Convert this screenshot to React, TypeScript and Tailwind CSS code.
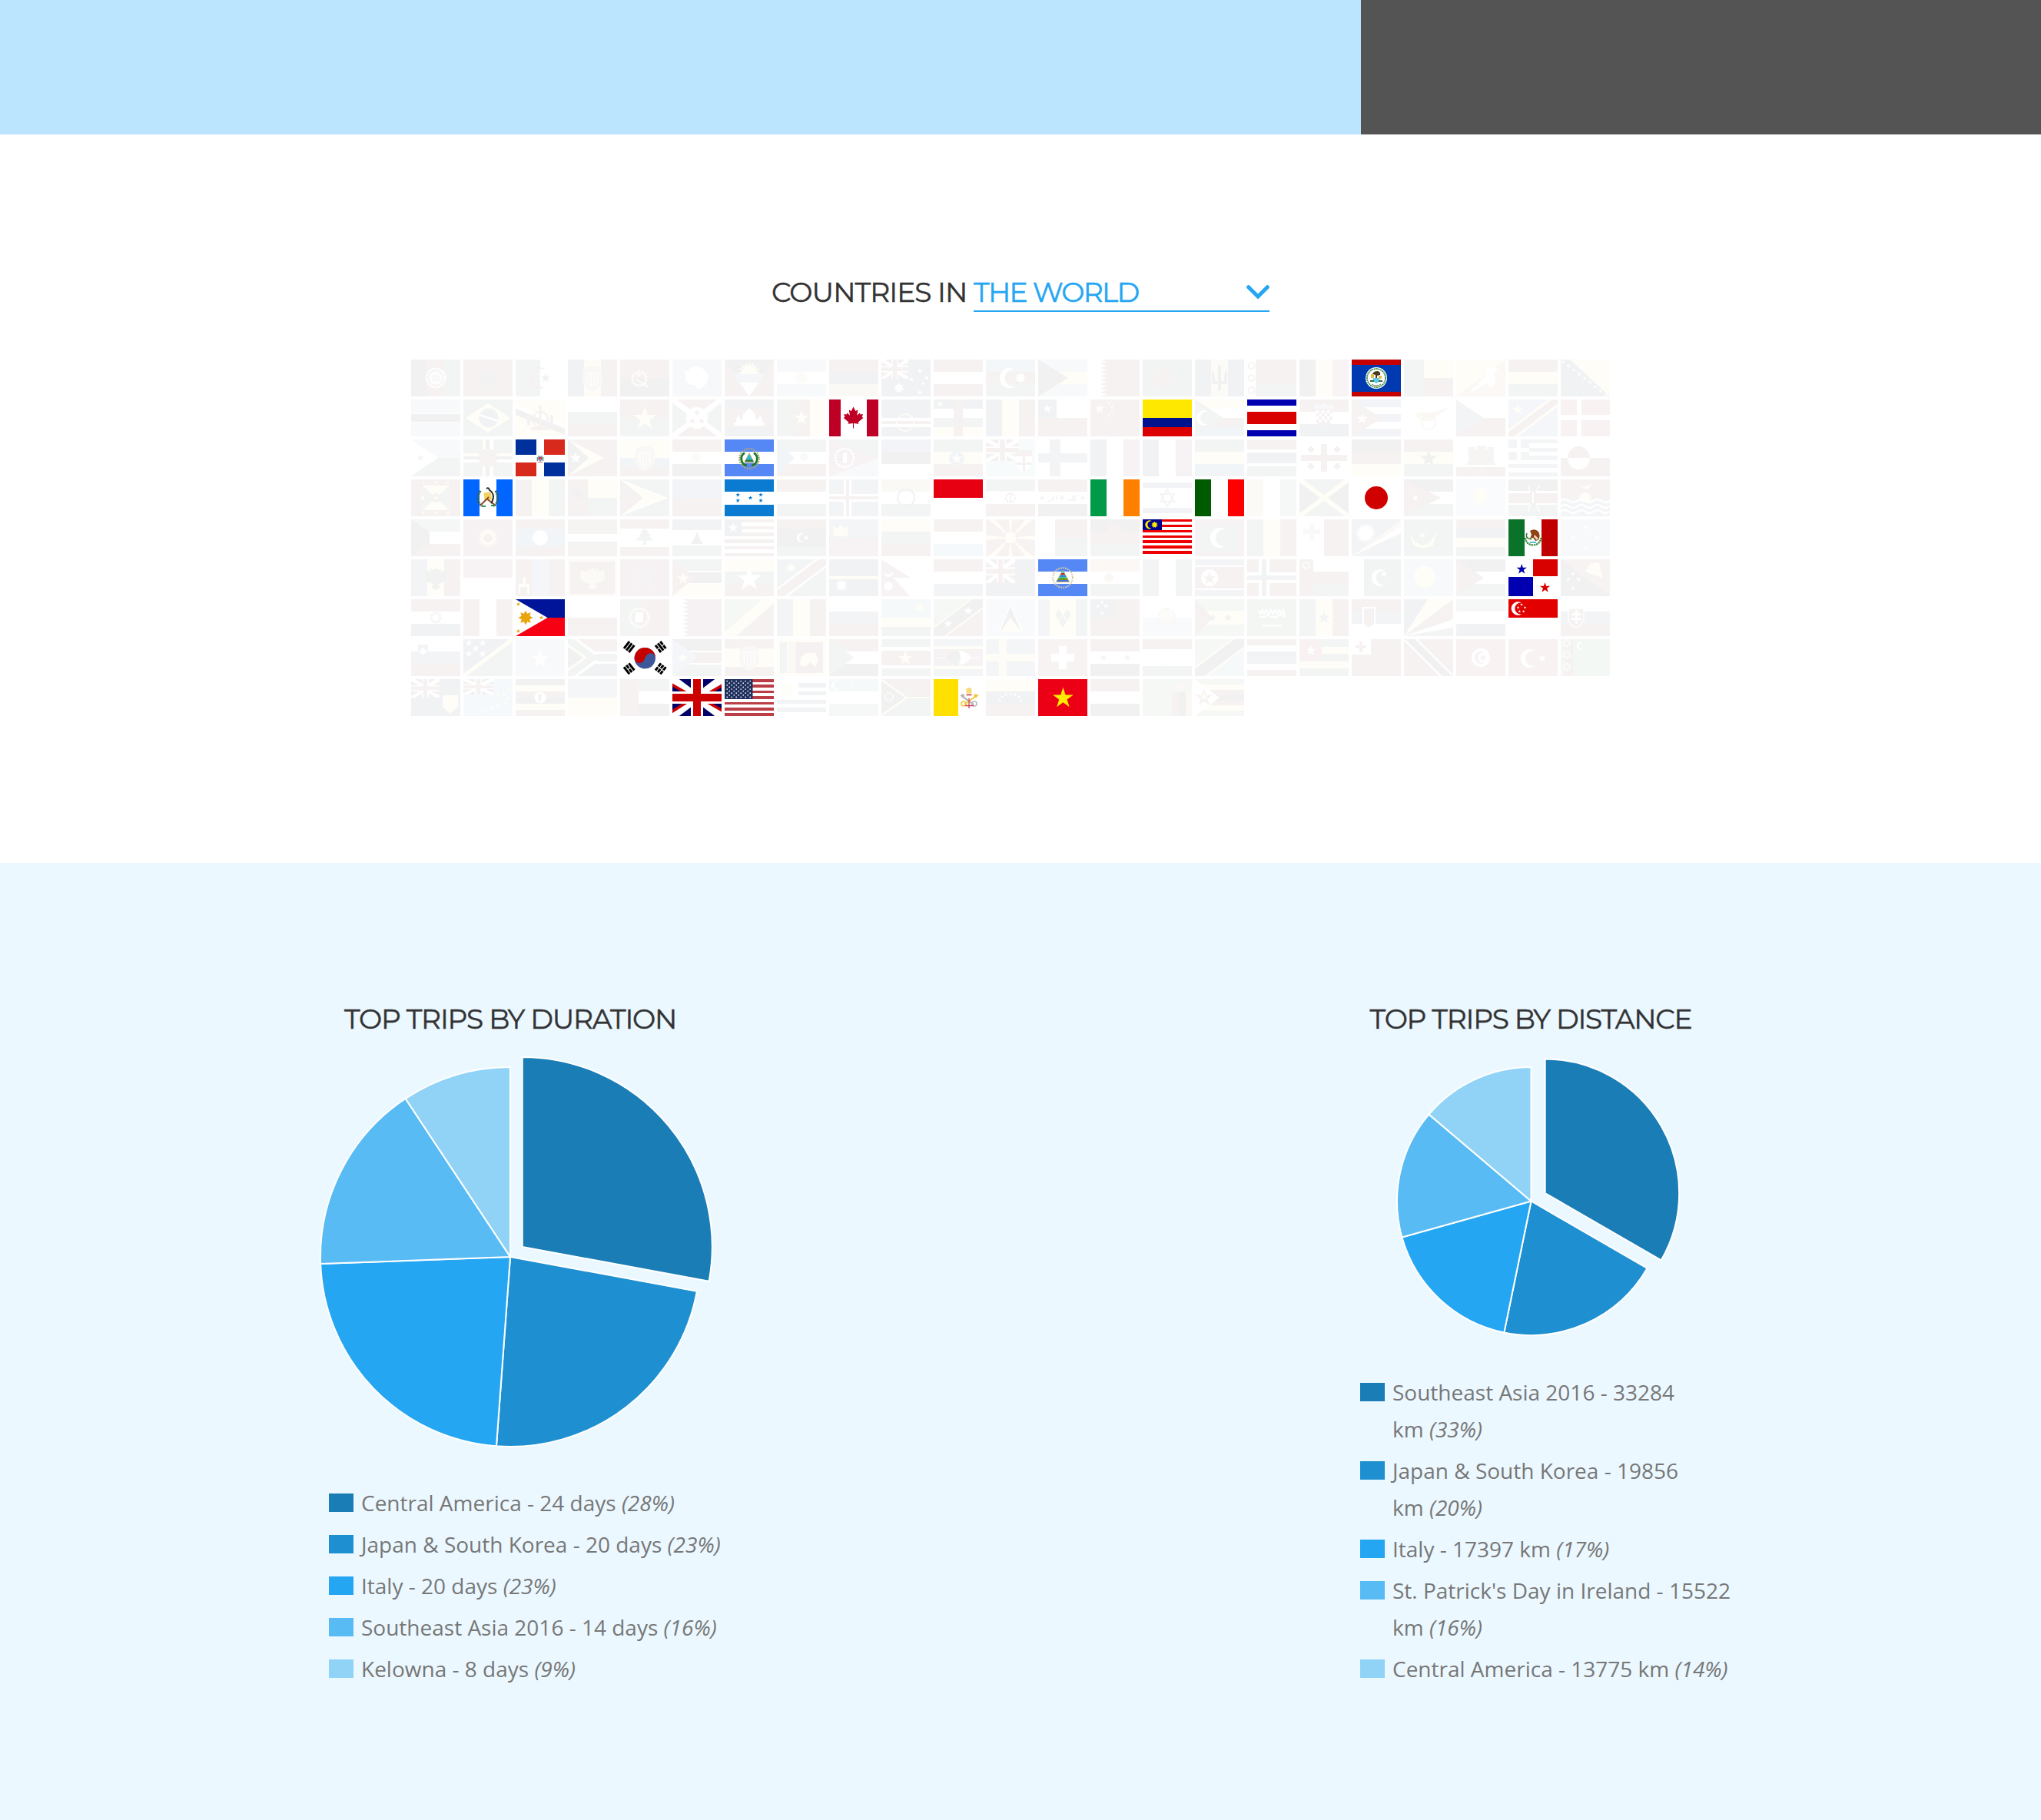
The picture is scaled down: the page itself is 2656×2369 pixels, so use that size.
import React from "react";

type Flag = { spec: string; visited?: boolean };

const palette: Record<string, string> = {
  k: "#000000",
  w: "#ffffff",
  r: "#c40000",
  g: "#00652b",
  b: "#00107a",
  B: "#0050a8",
  y: "#ffec00",
  o: "#ff8a00",
  s: "#55aadd",
  m: "#8f1238",
  d: "#4a4a4a",
  e: "#e8e000",
};
const col = (c: string) => palette[c] ?? c;

const starPoints = (cx: number, cy: number, r: number, n = 5, inner = 0.39) =>
  Array.from({ length: n * 2 }, (_, i) => {
    const rad = i % 2 === 0 ? r : r * inner;
    const a = (Math.PI * i) / n - Math.PI / 2;
    return `${(cx + rad * Math.cos(a)).toFixed(2)},${(cy + rad * Math.sin(a)).toFixed(2)}`;
  }).join(" ");

function UnionJack({ w, h }: { w: number; h: number }) {
  return (
    <svg x="0" y="0" width={w} height={h} viewBox="0 0 64 48" preserveAspectRatio="none">
      <rect width="64" height="48" fill="#000066" />
      <path d="M0 0L64 48M64 0L0 48" stroke="#fff" strokeWidth="10.5" />
      <path d="M-2 6.5L22 20M44 20L66 7.5M42 28L66 41.5M22 28L-2 43.5" stroke="#c00" strokeWidth="3.6" />
      <path d="M32 0V48M0 24H64" stroke="#fff" strokeWidth="16" />
      <path d="M32 0V48M0 24H64" stroke="#c00" strokeWidth="10" />
    </svg>
  );
}

function stripes(parts: string[], vertical: boolean, key: number) {
  const items = parts.map((p) => {
    const [c, n] = p.split("*");
    return { c, n: n ? Number(n) : 1 };
  });
  const total = items.reduce((a, i) => a + i.n, 0);
  let pos = 0;
  return (
    <g key={key} shapeRendering="crispEdges">
      {items.map((it, i) => {
        const full = vertical ? 64 : 48;
        const a = (pos / total) * full;
        pos += it.n;
        const len = (it.n / total) * full;
        return vertical ? (
          <rect key={i} x={a} y={0} width={len} height={48} fill={col(it.c)} />
        ) : (
          <rect key={i} x={0} y={a} width={64} height={len} fill={col(it.c)} />
        );
      })}
    </g>
  );
}

function emblem(name: string, key: number): React.ReactNode {
  switch (name) {
    case "leaf":
      return (
        <path
          key={key}
          fill="#bf0026"
          d="M31.5 9.5L34.3 15L37.4 13.4L36.2 20.8L39.8 17.4L40.6 19.5L44 18.9L42.8 22.8L44.4 24L37.8 29.6L38.4 31.8L32 30.9L32 37.5H31L31 30.9L24.7 31.8L25.3 29.6L18.8 24L20.4 22.8L19.2 18.9L22.6 19.5L23.4 17.4L27 20.8L25.7 13.4L28.8 15Z"
        />
      );
    case "korea": {
      const marks: [number, number, number, string][] = [
        [11.7, 10, -52, "111"],
        [52.7, 10, 52, "010"],
        [11.7, 38.4, 52, "101"],
        [52.7, 38.4, -52, "000"],
      ];
      return (
        <g key={key}>
          <g transform="translate(32.3 24.7) rotate(-4)">
            <circle r="13.7" fill="#3f5798" />
            <path d="M-13.7 0A13.7 13.7 0 0 1 13.7 0C12 -7.5 3.5 -8 0 0C-3.5 8 -12 7.5 -13.7 0Z" fill="#c40000" />
          </g>
          {marks.map(([x, y, a, bits], i) => (
            <g key={i} transform={`translate(${x} ${y}) rotate(${a})`}>
              {bits.split("").map((bit, j) => {
                const yy = (j - 1) * 4 - 1.5;
                return bit === "1" ? (
                  <rect key={j} x="-5.8" y={yy} width="11.6" height="3" />
                ) : (
                  <g key={j}>
                    <rect x="-5.8" y={yy} width="5.2" height="3" />
                    <rect x="0.6" y={yy} width="5.2" height="3" />
                  </g>
                );
              })}
            </g>
          ))}
        </g>
      );
    }
    case "belize":
      return (
        <g key={key}>
          <circle cx="32" cy="24" r="14" fill="#fff" />
          <circle cx="32" cy="24" r="12" fill="none" stroke="#2f8a3e" strokeWidth="1.8" strokeDasharray="2 .8" />
          <path d="M27 19Q28 15 34 15Q38 16 37 20L33 21V24H31V20Z" fill="#4a3a20" />
          <path d="M25 19h4v5h-4zM35 21h4v4h-4z" fill="#e8b94c" />
          <path d="M28 24h7l2 4-5 3-5-3z" fill="#5ccbe8" />
          <path d="M24 27h5v2h-5zM35 27h5v2h-5z" fill="#2f6a3e" />
          <path d="M26 32q6 4 12 0" stroke="#777" fill="none" />
        </g>
      );
    case "salvador":
      return (
        <g key={key}>
          <circle cx="32" cy="25" r="12.8" fill="none" stroke="#b5a67a" strokeWidth="2.2" strokeDasharray="1.8 1.3" />
          <path d="M26 17.5A9 9 0 0 0 29 34M38 17.5A9 9 0 0 1 35 34" fill="none" stroke="#1d7c2c" strokeWidth="2.8" />
          <path d="M32 18L38 29H26Z" fill="#2bb6d8" stroke="#c9a44c" strokeWidth=".8" />
          <path d="M28 26.5h8l1.4 2.5H26.6z" fill="#2e7a2a" />
          <path d="M26 31h12" stroke="#3d64c9" strokeWidth="1.4" />
        </g>
      );
    case "nicaragua":
      return (
        <g key={key}>
          <circle cx="32" cy="24" r="12.8" fill="none" stroke="#d8c9a0" strokeWidth="2" strokeDasharray="1.8 1.2" />
          <path d="M32 14L40.5 29.5H23.5Z" fill="#35dce0" stroke="#c9a44c" strokeWidth=".8" />
          <path d="M30.2 18h3.6l1.2 2.2h-6z" fill="#d22" />
          <path d="M28.5 21.4h7l.6 1.2h-8.2z" fill="#2a2ad0" />
          <path d="M26.5 24.8q5.5-2 11 0l1.2 2.2H25.3z" fill="#6a9a1a" />
          <path d="M25 27h14l1 2H24z" fill="#4a6fe0" />
        </g>
      );
    case "guatemala":
      return (
        <g key={key}>
          <path d="M22.5 15C17 22 18 31 25 35M41.5 15C47 22 45 31 39 35" fill="none" stroke="#35664a" strokeWidth="2.6" strokeDasharray="2.2 .9" />
          <path d="M26.5 17.5l9-1 1.5 10-9.5 1z" fill="#f4d160" />
          <path d="M22 34l11-11M42 34L30 25" stroke="#8a4a24" strokeWidth="1.8" />
          <path d="M30 12q3-2 4 2 5 3 5 9-1 6-3 8" fill="none" stroke="#26302c" strokeWidth="2" />
          <path d="M25 35h4M36 34h5" stroke="#2b9a58" strokeWidth="2" />
        </g>
      );
    case "dominican":
      return (
        <g key={key}>
          <path d="M29 21.5h6v5l-3 2.6-3-2.6z" fill="#8f9fd0" />
          <path d="M30 23h4v3h-4z" fill="#c44" />
          <path d="M28.3 23v5M35.7 23v5" stroke="#4f9a6a" strokeWidth="1.2" />
          <path d="M28.5 29.5h7" stroke="#d77" strokeWidth="1" />
        </g>
      );
    case "mexico":
      return (
        <g key={key}>
          <path d="M22 24Q23 33 32 33.5Q41 33 42.5 24" fill="none" stroke="#3a8a3a" strokeWidth="2.2" strokeDasharray="2.4 .8" />
          <path d="M28 15q6-4 11 1 3 6 0 11l-4 1-3-4-4 1 2-5z" fill="#8f4413" />
          <path d="M34 20l5 5-2 2-4-4z" fill="#ead9c0" />
          <path d="M24 18q-2 5 2 7l4 1" fill="none" stroke="#3f7a3a" strokeWidth="1.6" />
          <path d="M28 30h8" stroke="#46b6c4" strokeWidth="1.8" />
        </g>
      );
    case "vatican":
      return (
        <g key={key}>
          <path d="M42.5 12.5q3.5-3 7 0v6h-7z" fill="#f5dc7a" />
          <path d="M42.5 20.5h7" stroke="#c22" strokeWidth="1.4" />
          <path d="M38 23L52 33" stroke="#aaa" strokeWidth="2" />
          <path d="M55 22L40 33" stroke="#f0c83c" strokeWidth="2" />
          <path d="M34.5 21l4-2 2 3-3 2.5z" fill="#b5b5b5" />
          <path d="M58.5 21l-5-2-1.5 3 3 2.5z" fill="#f0c83c" />
          <circle cx="39" cy="32" r="3" fill="none" stroke="#f0c83c" strokeWidth="1.6" />
          <circle cx="53" cy="32" r="3" fill="none" stroke="#bbb" strokeWidth="1.6" />
          <path d="M46 25v13M41 34.5h11" stroke="#d0405a" strokeWidth="1.3" />
        </g>
      );
    case "usa":
      return (
        <g key={key}>
          <rect width="36.5" height="26" fill="#20305f" />
          {Array.from({ length: 9 }, (_, row) =>
            Array.from({ length: row % 2 ? 5 : 6 }, (_, i) => (
              <circle key={`${row}-${i}`} cx={3.2 + (row % 2 ? 3 : 0) + i * 6} cy={2.6 + row * 2.6} r=".85" fill="#fff" />
            )),
          )}
        </g>
      );
    case "wheel":
      return <circle key={key} cx="32" cy="24" r="11" fill="none" stroke="#007" strokeWidth="2" strokeDasharray="4 .5" />;
    case "hexstar":
      return <path key={key} d="M32 13L41 29H23ZM32 35L23 19H41Z" fill="none" stroke="#0038b8" strokeWidth="1.6" />;
    case "cedar":
      return <path key={key} d="M32 12L37 16 36 17 40 21 38 22 44 27 34 28V33H30V28L20 27 26 22 24 21 28 17 27 16Z" fill="#00652b" />;
    case "bosnia":
      return (
        <g key={key}>
          {Array.from({ length: 9 }, (_, i) => (
            <polygon key={i} points={starPoints(3 + i * 7, 3 + i * 5.4, 2.8)} fill="#fff" />
          ))}
        </g>
      );
    case "antarctica":
      return <path key={key} d="M14 13L19 16 23 11 31 9 40 12 46 18 46 24 44 32 38 37 32 38 30 33 24 33 18 28 17 20Z" fill="#fff" />;
    case "eagle":
      return <path key={key} d="M32 10L34 14 40 12 38 17 45 14 46 28 40 31 35 32 38 37 32 40 26 37 29 32 24 31 18 28 19 14 26 17 24 12 30 14Z" fill="#222" />;
    case "goldeagle":
      return <path key={key} d="M32 10L34 14 40 12 38 17 47 14 48 26 40 31 35 32 38 37 32 39 26 37 29 32 24 31 16 26 17 14 26 17 24 12 30 14Z" fill="#d8b040" />;
    case "crest":
      return (
        <g key={key}>
          <path d="M20 12q12-7 24 0l1 14q-2 12-13 15q-11-3-13-15z" fill="#b08a4a" />
          <path d="M24 16h16v12q-2 6-8 8q-6-2-8-8z" fill="#e4d3a8" />
          <path d="M28 18v14M32 18v16M36 18v14" stroke="#943" strokeWidth="1.5" />
        </g>
      );
    case "wave":
      return (
        <g key={key} fill="none" stroke="#fff" strokeWidth="2.6">
          {[28, 35, 42].map((y) => (
            <path key={y} d={`M0 ${y}q5.3-4 10.6 0t10.6 0t10.6 0t10.6 0t10.6 0t10.6 0`} />
          ))}
        </g>
      );
    case "temple":
      return <path key={key} d="M12 34V30H15V26L18 20L20 26H24V20L28 15L32 11L36 15L40 20V26H43L46 20L49 26V30H52V34Z" fill="#fff" />;
    case "bhutan":
      return <path key={key} d="M20 43q-2-7 7-8q3-8 11-13q-2-10 8-12l8 2-5 8q4 7 0 15q-7 2-9-5l-10 7z" fill="#fff" />;
    case "castle":
      return <path key={key} d="M16 10h9v4h2V8h11v6h2v-4h9v21h3v2H13v-2h3zM30 37h4v9h-4z" fill="#a33" />;
    case "cyprus":
      return <path key={key} d="M15 20Q20 15 30 17Q44 16 60 9Q50 18 41 22Q38 29 28 28Q18 27 15 20Z" fill="#f0a000" />;
    case "shield":
      return <path key={key} d="M10 12H30V26Q27 34 20 37Q12 34 10 26Z" fill="#c40000" stroke="#fff" strokeWidth="1.5" />;
    case "checks":
      return (
        <g key={key}>
          <path d="M22 12H43V28Q40 34 32.5 36Q24 34 22 28Z" fill="#c40000" />
          {Array.from({ length: 12 }, (_, i) => (
            <rect key={i} x={22 + (i % 3) * 7 + (Math.floor(i / 3) % 2) * 3.5} y={14 + Math.floor(i / 3) * 4} width="3.5" height="4" fill="#fff" />
          ))}
          <path d="M19 12L21 5 26 8 32 5 38 8 43 5 46 12Z" fill="#68a" />
        </g>
      );
    case "script":
      return <path key={key} d="M15 15l2 4 3-5 2 5 3-5 3 5 3-5 2 5 3-5 3 5 3-5 2 5 3-5 2 8M16 23h8l3-3 4 3h8l4-3 5 3" fill="none" stroke="#fff" strokeWidth="2" />;
    case "swazi":
      return (
        <g key={key}>
          <path d="M4 24H60" stroke="#55aadd" strokeWidth="2" />
          <path d="M16 24Q22 15 32 14Q44 16 49 24Q43 33 32 34Q21 33 16 24Z" fill="#000" />
          <path d="M32 14Q44 16 49 24Q43 33 32 34Q38 24 32 14Z" fill="#fff" />
        </g>
      );
    case "sunrays":
      return (
        <g key={key}>
          {Array.from({ length: 8 }, (_, i) => (
            <path key={i} d="M32 24L28 -20H36Z" transform={`rotate(${i * 45} 32 24)`} fill="#ffec00" />
          ))}
          <circle cx="32" cy="24" r="8" fill="#ffec00" stroke="#c40000" />
        </g>
      );
    case "nepal":
      return (
        <g key={key}>
          <path d="M0 0L38 24H16L37 48H0Z" fill="#c4001c" />
          <path d="M4 16q6 7 11 0q1 7-6 7q-6-1-5-7z" fill="#fff" />
          <polygon points={starPoints(9, 35, 7, 12, 0.7)} fill="#fff" />
        </g>
      );
    case "serrate":
      return <path key={key} d="M0 0H13L21 2.7 13 5.3 21 8 13 10.7 21 13.3 13 16 21 18.7 13 21.3 21 24 13 26.7 21 29.3 13 32 21 34.7 13 37.3 21 40 13 42.7 21 45.3 13 48H0Z" fill="#fff" />;
    case "iraq":
      return (
        <g key={key}>
          {[5, 31, 58].map((x) => (
            <polygon key={x} points={starPoints(x, 24, 4)} fill="#00652b" />
          ))}
          <path d="M13 28q6 1 8-7M24 20v7M38 27h7v-6M48 20v8" fill="none" stroke="#00652b" strokeWidth="1.8" />
        </g>
      );
    case "trident":
      return <path key={key} d="M22 12q5 8 4 16h4V10l2-4 2 4v18h4q-1-8 4-16v20h-8v8h-4v-8h-8z" fill="#000" />;
    case "map":
      return <path key={key} d="M12 22l2 5-3 3-3-3zM4 32h5v-2h4v2h5v13h-3V36H6v9H4z" fill="#ffec00" />;
    default:
      return null;
  }
}

function draw(token: string, key: number): React.ReactNode {
  const [op, ...a] = token.trim().split(/\s+/);
  const n = a.map(Number);
  switch (op) {
    case "h":
      return stripes(a, false, key);
    case "v":
      return stripes(a, true, key);
    case "r":
      return <rect key={key} x={n[0]} y={n[1]} width={n[2]} height={n[3]} fill={col(a[4])} shapeRendering="crispEdges" />;
    case "c":
      return <circle key={key} cx={n[0]} cy={n[1]} r={n[2]} fill={col(a[3])} />;
    case "o":
      return <circle key={key} cx={n[0]} cy={n[1]} r={n[2]} fill="none" stroke={col(a[3])} strokeWidth={n[4] || 2} strokeDasharray="3 1" />;
    case "p":
      return <polygon key={key} points={a.slice(0, -1).join(" ")} fill={col(a[a.length - 1])} />;
    case "s":
      return <polygon key={key} points={starPoints(n[0], n[1], n[2])} fill={col(a[3])} />;
    case "S":
      return <polygon key={key} points={starPoints(n[0], n[1], n[2], n[4], 0.6)} fill={col(a[3])} />;
    case "l":
      return <line key={key} x1={n[0]} y1={n[1]} x2={n[2]} y2={n[3]} strokeWidth={n[4]} stroke={col(a[5])} />;
    case "m":
      return (
        <path
          key={key}
          fill={col(a[3])}
          d={`M${n[0] + n[2] * 0.55} ${n[1] - n[2] * 0.83}A${n[2]} ${n[2]} 0 1 0 ${n[0] + n[2] * 0.55} ${n[1] + n[2] * 0.83}A${n[2] * 0.85} ${n[2] * 0.85} 0 1 1 ${n[0] + n[2] * 0.55} ${n[1] - n[2] * 0.83}Z`}
        />
      );
    case "u":
      return <UnionJack key={key} w={n[0]} h={n[1]} />;
    case "e":
      return emblem(a[0], key);
    default:
      return null;
  }
}

const f = (spec: string): Flag => ({ spec });
const on = (spec: string): Flag => ({ spec, visited: true });

const flags: Flag[] = [
  f("v k r g|o 32 24 12 w 3|c 32 24 9 #ddd|r 27 20 10 8 #999"),
  f("h #c00010|e eagle"),
  f("v g w|m 31 24 14 r|s 39 24 7 r"),
  f("v b e r|e crest"),
  f("h r k|o 25 25 9 y 3|s 24 20 4 y|l 20 25 37 36 2 y"),
  f("h #5a8fd0|e antarctica"),
  f("h r|p 0,0 64,0 32,48 k|S 32 17 15 y 16|p 12.5,19 51.5,19 44.5,30 19.5,30 #2a5fc8|p 19.5,30 44.5,30 32,48 w"),
  f("h s w s|S 32 24 9 #e8b84c 16"),
  f("h r b #e8a000"),
  f("h b|u 35 25|S 23 37 7 w 7|S 50 15 3 w 7|S 39 26 3 w 7|S 59 24 3 w 7|S 50 43 3 w 7|S 54 31 2 w 5"),
  f("h r w r"),
  f("h #1a7fc0 r g|m 31 24 13 w|S 45 24 7 w 8"),
  f("h s y s|p 0,0 39,24 0,48 k"),
  f("h r|e serrate"),
  f("h #00503c|c 26 24 13 r"),
  f("v b #f2c030 b|e trident"),
  f("h r*2 g|r 0 0 11 48 w|o 5.5 8 4 r 2|o 5.5 24 4 r 2|o 5.5 40 4 r 2"),
  f("v k y #d0202c"),
  on("h #c40000*7 #0039b0*34.5 #c40000*6.5|e belize"),
  f("h y r|r 0 0 26 48 g"),
  f("h o|p 0,0 64,0 0,48 y|e bhutan"),
  f("h r y g"),
  f("h b|p 12,0 64,0 64,48 y|e bosnia"),

  f("h s*18 w k*10 w s*18"),
  f("h g|p 3,24 32,5 61,24 32,43 y|c 33 24 12.5 b|l 21 20 45 28 2.5 w"),
  f("h y|p 0,6 64,32 64,44 0,18 w|p 0,12 64,38 64,46 0,20 k|o 32 26 10 r 3|l 32 8 32 36 3 r|l 20 38 44 38 4 r|l 17 20 17 34 4 r|l 47 20 47 34 4 r"),
  f("h w g r"),
  f("h r g|s 32 25 16 y"),
  f("h r|p 0,0 32,24 0,48 g|p 64,0 32,24 64,48 g|l 0 0 64 48 7 w|l 64 0 0 48 7 w|c 32 24 14 w|S 32 17 3.5 r 6|S 26 28 3.5 r 6|S 38 28 3.5 r 6"),
  f("h b r*2 b|e temple"),
  f("v g r y|s 32 24 10 y"),
  on("r 0 0 15 48 #bf0026|r 49 0 15 48 #bf0026|e leaf"),
  f("h b*24 w*4 r*4 w*4 b*12|o 31 30 11 y 2"),
  f("h b w g y|r 26 0 12 48 r|s 8 6 5 y"),
  f("v b y r"),
  f("h w r|r 0 0 24 24 b|s 12 12 6 w"),
  f("h #d00000|s 12 12 7 y|s 24 5 2.5 y|s 28 10 2.5 y|s 28 16 2.5 y|s 24 21 2.5 y"),
  on("h #ffe800*24 #00128c*12 #dd0000*12"),
  f("h y w r B|p 0,0 37,24 0,48 g|m 12 24 10 w"),
  on("h #0000b0*7.5 w*8.5 #d90000*16 w*8 #0000b0*8"),
  f("h r w b|e checks"),
  f("h #1246a0 w #1246a0 w #1246a0|p 0,0 40,24 0,48 #d02020|s 13.5 25 7 w"),
  f("h w|e cyprus|o 32 30 9 g 1.5"),
  f("h w r|p 0,0 36,24 0,48 #103a80"),
  f("h #2a60d8|l 0 48 64 0 15 y|l 0 48 64 0 9 r|s 12 13 8 y"),
  f("h #d00020|r 21 0 6 48 w|r 0 20 64 7 w"),

  f("h #5aa8e8 g|p 0,0 35,24 0,48 w|s 12 24 5 r"),
  f("h g|r 25 0 4 48 y|r 29 0 5 48 k|r 34 0 5 48 w|r 0 18 64 4 y|r 0 22 64 4 k|r 0 26 64 4 w|c 32 24 12 r|o 32 24 9 g 2"),
  on("r 0 0 27 20 #00309c|r 37 0 27 20 #d82a1c|r 0 30 27 18 #d82a1c|r 37 30 27 18 #00309c|e dominican"),
  f("h r|p 0,0 47,24 0,48 y|p 0,0 27,24 0,48 k|s 10 24 8 w"),
  f("h y*2 B r|e crest"),
  f("h r w k|c 31 24 6 #e8c060"),
  on("h #5588f5 w #5588f5|e salvador"),
  f("h g w r|p 0,0 23,24 0,48 B|c 35 23 5 #999"),
  f("h g s|p 0,0 64,24 0,48 #c00020|o 20 24 12 w 3|r 18 17 5 14 w"),
  f("h #1448b0 k w"),
  f("h g y r|c 30 25 10 B|s 30 25 8 y"),
  f("h #68bfe5|u 43 28|p 39,14 60,14 60,33 49,45 39,33 w|r 39 14 21 8 r|r 48 22 3 20 r|r 39 30 21 3 r"),
  f("h w|r 15 0 14 48 #103a80|r 0 18 64 12 #103a80"),
  f("v b w #c00020"),
  f("v b w #c00020"),
  f("h g y B"),
  f("h r*13 w*4 b*14 w*4 g*13"),
  f("h w|r 28 6 8 36 r|r 2 20 60 8 r|r 13 9 4 8 r|r 11 11 8 4 r|r 47 9 4 8 r|r 45 11 8 4 r|r 13 31 4 8 r|r 11 33 8 4 r|r 47 31 4 8 r|r 45 33 8 4 r"),
  f("h k r y"),
  f("h r y g|s 32 25 12 k"),
  f("h w*3 r*1|e castle"),
  f("h #0a4fb0 w #0a4fb0 w #0a4fb0 w #0a4fb0 w #0a4fb0|r 0 0 27 26.6 #0a4fb0|r 11 0 5 26.6 w|r 0 11 27 5 w"),
  f("h w r|p 9,24 10,18 14,12 20,9 27,9 33,13 37,18 38,24 r|p 9,24 10,30 14,36 20,39 27,39 33,36 37,30 38,24 w"),

  f("h #c00010|r 15 8 35 32 y|p 15,8 32,24 15,40 g|p 50,8 32,24 50,40 g|c 32 24 6 r|s 32 24 4 y|s 16 4 2.5 y|s 32 4 2.5 y|s 48 4 2.5 y|s 16 44 2.5 y|s 32 44 2.5 y|s 48 44 2.5 y|c 15 24 2.5 y"),
  on("v #0066ff*21 w*22 #0066ff*21|e guatemala"),
  f("v r y g"),
  f("h y g|r 0 0 26 48 r|s 13 20 9 k"),
  f("h g|p 0,0 62,24 0,48 w|p 0,2 57,24 0,46 y|p 0,0 29,24 0,48 k|p 0,2 26,24 0,46 r"),
  f("h #1040a0 r"),
  on("h #0a7bd0*15.5 w*17 #0a7bd0*15.5|s 17.2 20 3 #0a7bd0|s 17.2 27.5 3 #0a7bd0|s 33.5 24 3 #0a7bd0|s 47 20 3 #0a7bd0|s 47 27.5 3 #0a7bd0"),
  f("h r w g"),
  f("h #10409a|r 19 0 10 48 w|r 0 19 64 10 w|r 22 0 4 48 r|r 0 22 64 4 r"),
  f("h #f09030 w g|e wheel"),
  on("h #e70011 w"),
  f("h g w r|l 0 16 64 16 1 w|o 32 24 6 r 2|l 32 18 32 31 2 r"),
  f("h r w k|e iraq"),
  on("v #009a49*21 w*22 #ff7f00*21"),
  f("h w|r 0 4 64 7 #0030a0|r 0 37 64 7 #0030a0|e hexstar"),
  on("v #005a00*21 w*22 #ff0000*21"),
  f("v #f0a030 w #209a50"),
  f("h g|p 0,0 32,24 0,48 k|p 64,0 32,24 64,48 k|l 0 0 64 48 6 y|l 64 0 0 48 6 y"),
  on("c 32 24 15 #d00000"),
  f("h k w g|p 0,0 48,24 0,48 r|S 15 24 3.5 w 7"),
  f("h #80c4e8|c 32 20 10 y|l 20 31 46 33 2 y"),
  f("h k*15 w*2.5 r*13 w*2.5 g*15|l 25 8 40 42 1.5 w|l 40 8 25 42 1.5 w|p 32,9 39,24 32,41 25,24 #700|r 31 17 2 14 w"),
  f("h #d02020*26 #1050a0*22|S 32 25 10 y 16|p 21,7 32,10 43,5 34,13 y|r 0 29 64 19 #1050a0|e wave"),

  f("h #108040 w r|p 0,0 24,16 24,32 0,48 k"),
  f("h #b00020|S 32 24 14 y 20|c 32 24 6 r"),
  f("h r B*2 r|c 32 24 10 w"),
  f("h #80202c*2 w #80202c*2"),
  f("h r w*2 r|e cedar"),
  f("h #10307a*14 w*20 g*14|p 32,16 36,26 40,32 24,32 28,26 k"),
  f("h r w r w r w r w r w r|r 0 0 22 21.8 b|s 11 11 7 w"),
  f("h r k*2 g|m 32 24 6 w|s 38 24 4 w"),
  f("h #2a50a8 #c00020|p 5,9 10,12 15,7 20,12 25,9 24,22 6,22 y"),
  f("h y g r"),
  f("h r w #40a8d8"),
  f("h #d02010|e sunrays"),
  f("h r g|r 0 0 22 48 w"),
  f("h k r g|S 32 14 12 r 20|r 0 16 64 16 r"),
  on("h #ee0000 w #ee0000 w #ee0000 w #ee0000 w #ee0000 w #ee0000 w #ee0000 w|r 0 0 25 14 #00008a|m 9 7 5.5 y|S 15.5 7 4.5 y 11"),
  f("h #c00020|r 6 6 51 36 g|m 33 24 13 w"),
  f("v g y r"),
  f("v w r|l 16 5 16 27 6 #999|l 5 16 27 16 6 #999"),
  f("h #103a90|p 0,48 64,1 64,9 o|p 0,48 64,9 64,18 w|S 18 18 14 w 20"),
  f("h g|p 8,17 14,29 24,34 34,30 42,17 38,34 25,38 12,34 y|s 24 20 5 y"),
  f("h r b y g"),
  on("v #0b7229*21 w*22 #c00000*21|e mexico"),
  f("h #60a0e0|s 32 10 4 w|s 16 24 4 w|s 47 24 4 w|s 32 38 4 w"),

  f("v #103a90 y r|e eagle"),
  f("h #c00020 w"),
  f("v r #1070c8 r|e map"),
  f("h #e0c060|r 3 3 58 42 r|e goldeagle"),
  f("h #b00020|s 32 24 15 g|s 32 24 9 #b00020"),
  f("h g*15 w*2 k*14 w*2 y*15|p 0,0 30,24 0,48 r|s 14 25 8 y"),
  f("h y g r|s 32 26 17 w"),
  f("h #10409a|p 64,0 64,48 0,48 g|l 0 48 64 0 17 w|l 0 48 64 0 12 r|S 18 11 6 y 12"),
  f("h #00107a|r 0 22 64 4 y|S 16 34 8 w 12"),
  f("e nepal"),
  f("h r w #10409a"),
  f("h b|u 38 31|s 50 15 3 r|s 42 27 3 r|s 58 26 3 r|s 50 44 3 r"),
  on("h #5588f5 w #5588f5|e nicaragua"),
  f("h #f08030 w g|c 24 24 6 #f08030"),
  f("v g w g"),
  f("h #103a80*8 w*2 #c00010*28 w*2 #103a80*8|c 19 24 11 w|s 19 25 9 #c00010"),
  f("h r|r 15 0 14 48 w|r 0 17 64 14 w|r 19 0 6 48 #10307a|r 0 21 64 6 #10307a"),
  f("h w r g|r 0 0 18 48 r|o 9 8 4 w 2"),
  f("h #003a20|r 0 0 16 48 w|m 37 24 11 w|s 42 19 5 w"),
  f("h #5aa0e8|c 27 23 14 y"),
  f("h k w g|p 0,0 36,24 0,48 r"),
  on("h w|r 32 0 32 22 #d90000|r 0 22.5 32 25.5 #0000b0|s 17.2 13 7 #0000b0|s 47.5 37 7 #d90000"),
  f("h #d01020|p 0,0 64,48 0,48 k|s 16 19 3 w|s 10 26 3 w|s 23 26 3 w|s 16 38 3 w|p 32,16 38,6 50,4 54,24 42,20 y"),

  f("h r w b|o 32 24 6 g 3"),
  f("v r w r"),
  on("h #001499 #f80014|p 0,0 41.5,24 0,48 w|S 13 24 9.5 #eaa50c 8|c 13 24 5 #eaa50c|s 3.5 6.5 2.8 #eaa50c|s 33.5 24 2.8 #eaa50c|s 3.5 41.5 2.8 #eaa50c"),
  f("h w r"),
  f("v g*25 r*39|o 25 24 12 y 3|r 20 17 10 13 #fff"),
  f("h m|e serrate"),
  f("h r|p 0,0 64,0 0,48 #209040|l 0 52 64 -4 14 y"),
  f("v #103a90 y r"),
  f("h w #10409a r"),
  f("h #30a0d8*2 y g|S 50 11 6 y 16"),
  f("h #209040|p 64,0 64,48 0,48 r|l 0 48 64 0 20 y|l 0 48 64 0 16 k|s 19 32 6 w|s 45 15 6 w"),
  f("h #68b8e8|p 32,6 48,43 16,43 w|p 32,9 46,43 18,43 k|p 32,24 46,43 18,43 y"),
  f("v #1050b0*15 y*34 g*15|p 27,13 32,20 27,28 22,20 g|p 38,13 43,20 38,28 33,20 g|p 32,22 37,29 32,37 27,29 g"),
  f("h r|r 0 0 31 24 b|s 15 4 3 w|s 10 9 3 w|s 20 9 3 w|s 15 18 3 w"),
  f("h w #60b8e0|o 31 23 10 #c0a040 4|c 31 23 7 #d8c890|r 29 11 4 5 #a80"),
  f("h #209040 y*1.3 #209040|p 0,0 23,24 0,48 r|s 23 24 5 k|s 43 24 5 k"),
  f("h #107a30|e script|l 20 34.5 46 34.5 2 w"),
  f("v g y r|s 32 24 9 g"),
  f("h r #103a80 w|p 14,10 31,10 31,34 22,40 14,34 w|p 16,12 29,12 29,32 22,37 16,32 r"),
  f("h g|p 0,0 31,0 0,48 b|p 31,0 64,0 0,48 y|p 64,0 64,26 0,48 r|p 64,26 64,37 0,48 w"),
  f("h #20a050 w b"),
  on("h #e20000 w|m 12.5 12 8.8 w|s 17 7 2 w|s 12.5 10.8 2 w|s 21.5 10.8 2 w|s 14.3 15.8 2 w|s 19.7 15.8 2 w"),
  f("h w #10409a r|e shield|r 19 14 3 18 w|r 15 18 11 3 w|r 14 24 13 3 w"),

  f("h w #10408a r|p 9,7 22,7 22,17 15,23 9,17 #10408a|p 11,16 15,11 21,16 15,21 w"),
  f("h b|p 64,0 64,48 0,48 g|l 0 48 64 0 5 y|s 7 5 5 w|s 25 5 5 w|s 16 12 5 w|s 7 19 5 w|s 25 19 5 w"),
  f("h #5aa0e8|s 32 26 12 w"),
  f("h r*16 w*3 g*10 w*3 b*16|p 0,0 13,0 39,19 39,29 13,48 0,48 w|p 0,0 8,0 34,20 64,20 64,28 34,28 8,48 0,48 g|p 0,6 25,24 0,42 y|p 0,10 20,24 0,38 k"),
  on("h w|e korea"),
  f("h k*15 w*2 r*14 w*2 g*15|p 0,0 34,24 0,48 #2070c0|s 13 24 7 y"),
  f("h r y*2 r|e crest"),
  f("h y|r 4 4 9 40 g|r 14 4 9 40 o|r 24 4 36 40 #800020|p 30,34 31,24 38,18 50,18 54,26 50,36 44,30 36,36 y"),
  f("h r w k|p 0,0 32,24 0,48 g"),
  f("h g*10 w*4.5 r*19 w*4.5 g*10|s 31 25 10 y"),
  f("h #1050a0*9 y*4 #c01020*22 y*4 #1050a0*9|e swazi"),
  f("h #1050a0|r 17 0 10 48 #ffd000|r 0 19 64 10 #ffd000"),
  f("h #d01010|r 27 9 10 30 w|r 17 19 30 10 w"),
  f("h r w k|s 17 24 5 g|s 48 24 5 g"),
  f("h r*13 w*22 g*13|o 31 24 9 y 2"),
  f("h #209040|p 64,0 64,48 0,48 #20a0d8|l 0 48 64 0 20 y|l 0 48 64 0 15 k"),
  f("h r w #10307a*2 w r"),
  f("h g y g y g|r 0 0 29 29 #d00010|s 15 15 7 w"),
  f("h r|r 0 0 25 20 w|r 10 3 4 14 r|r 5 8 14 4 r"),
  f("h #c00010|l 5 -3 59 51 14 w|l 5 -3 59 51 9 k"),
  f("h #d00010|c 32 24 12 w|m 32 24 8 #d00010|s 35 24 5 #d00010"),
  f("h #d00020|m 28 25 12 w|s 44 25 6 w"),
  f("h #109040|r 4 0 12 48 r|o 8 5 4 w 2|o 8 20 4 w 2|o 8 36 4 w 2|m 26 9 5 w"),

  f("h b|u 37 24|p 41,21 61,21 61,36 51,45 41,36 y"),
  f("h #40a8d8|u 39 20|s 29 42 3 y|s 37 37 3 y|s 45 34 3 y|s 54 32 3 y|s 58 25 3 y|s 53 19 3 y|s 59 12 3 y|s 45 20 3 y"),
  f("h k y r k y r|c 32 24 7.5 w|p 30,18 34,20 33,29 29,28 r"),
  f("h #2060c0 y"),
  f("h g w k|r 0 0 24 48 r"),
  on("u 64 48"),
  on("h #bb3d45 w #bb3d45 w #bb3d45 w #bb3d45 w #bb3d45 w #bb3d45 w #bb3d45|e usa"),
  f("h w #10307a w #10307a w #10307a w #10307a w|r 0 0 28 26 w|S 13 14 10 y 16"),
  f("h #30a0d0 w #209a40|m 9 8 6 w|c 24 4 1 w|c 29 4 1 w|c 29 8 1 w|c 24 12 1 w|c 29 12 1 w"),
  f("h r g|p 0,0 34,22 64,22 64,26 34,26 0,48 k|l 0 1 33 24 2.5 y|l 0 47 33 24 2.5 y|l 32 24 64 24 2 y|o 10 23 5 y 2"),
  on("r 0 0 32 48 #ffe000|e vatican"),
  f("h y b r|s 18 28 2.5 w|s 21 23 2.5 w|s 26 20 2.5 w|s 32 19 2.5 w|s 38 20 2.5 w|s 43 23 2.5 w|s 46 28 2.5 w"),
  on("h #ec0015|s 32.4 24.8 14 y"),
  f("h r w k"),
  f("h #209040|r 38 17 9 31 r|r 47 17 9 31 k|r 56 17 8 31 o|p 40,10 50,5 60,10 50,14 o"),
  f("h #209040 y r k r y #209040|p 0,0 32,24 0,48 w|s 12 24 12 r|s 12 23 6 y"),
];

function FlagTile({ flag }: { flag: Flag }) {
  return (
    <svg
      viewBox="0 0 64 48"
      className={flag.visited ? "block h-12 w-16 overflow-hidden" : "block h-12 w-16 overflow-hidden opacity-5 grayscale-50"}
    >
      {flag.spec.split("|").map(draw)}
    </svg>
  );
}

const sliceColors = ["#1a7db5", "#1e90d1", "#24a6f2", "#59bbf4", "#91d3f7"];

function Pie({ values, radius, pull }: { values: number[]; radius: number; pull: number }) {
  const total = values.reduce((a, v) => a + v, 0);
  const size = (radius + 1) * 2;
  const centre = radius + 1;
  let angle = 0;
  return (
    <svg width={size} height={size} className="block overflow-visible">
      {values.map((v, i) => {
        const start = angle;
        const end = angle + (v / total) * Math.PI * 2;
        angle = end;
        const mid = (start + end) / 2;
        const shift = i === 0 ? pull : 0;
        const cx = centre + Math.sin(mid) * shift;
        const cy = centre - Math.cos(mid) * shift;
        const x1 = cx + Math.sin(start) * radius;
        const y1 = cy - Math.cos(start) * radius;
        const x2 = cx + Math.sin(end) * radius;
        const y2 = cy - Math.cos(end) * radius;
        return (
          <path
            key={i}
            d={`M${cx} ${cy}L${x1} ${y1}A${radius} ${radius} 0 0 1 ${x2} ${y2}Z`}
            fill={sliceColors[i]}
            stroke="#fff"
            strokeWidth="2"
          />
        );
      })}
    </svg>
  );
}

const swatches = ["bg-[#1a7db5]", "bg-[#1e90d1]", "bg-[#24a6f2]", "bg-[#59bbf4]", "bg-[#91d3f7]"];

type Entry = { label: string; tail?: string; share: string };

function Legend({ entries }: { entries: Entry[] }) {
  return (
    <ul className="flex flex-col gap-1.5 whitespace-nowrap font-['Open_Sans',sans-serif] text-[28px] leading-[48px] tracking-normal text-[#777]">
      {entries.map((e, i) => (
        <li key={e.label} className="flex">
          <span className={`mt-3 mr-2.5 h-6 w-8 shrink-0 ${swatches[i]}`} />
          <span>
            {e.label}
            {e.tail ? (
              <>
                <br />
                {e.tail}
              </>
            ) : null}{" "}
            <em>{e.share}</em>
          </span>
        </li>
      ))}
    </ul>
  );
}

const durations: Entry[] = [
  { label: "Central America - 24 days", share: "(28%)" },
  { label: "Japan & South Korea - 20 days", share: "(23%)" },
  { label: "Italy - 20 days", share: "(23%)" },
  { label: "Southeast Asia 2016 - 14 days", share: "(16%)" },
  { label: "Kelowna - 8 days", share: "(9%)" },
];

const distances: Entry[] = [
  { label: "Southeast Asia 2016 - 33284", tail: "km", share: "(33%)" },
  { label: "Japan & South Korea - 19856", tail: "km", share: "(20%)" },
  { label: "Italy - 17397 km", share: "(17%)" },
  { label: "St. Patrick's Day in Ireland - 15522", tail: "km", share: "(16%)" },
  { label: "Central America - 13775 km", share: "(14%)" },
];

export default function App() {
  return (
    <div className="flex h-[2369px] w-[2656px] flex-col overflow-hidden bg-white font-['Montserrat','Lato',sans-serif] text-[36px] tracking-[-1.25px] text-[#333]">
      <div className="flex h-[175px] shrink-0">
        <div className="w-[1771px] bg-[#bbe4ff]" />
        <div className="flex-1 bg-[#545454]" />
      </div>

      <section className="flex h-[948px] shrink-0 flex-col items-center bg-white pt-[180px]">
        <div className="flex w-[648px] items-start justify-between leading-[51px]">
          <h2 className="whitespace-nowrap tracking-[-0.95px] [-webkit-text-stroke:0.5px_currentColor]">COUNTRIES IN</h2>
          <div className="flex h-[51px] w-[385px] shrink-0 items-start justify-between border-b-2 border-[#24a6f2] text-[#24a6f2]">
            <span className="whitespace-nowrap tracking-[-1.7px] [-webkit-text-stroke:0.5px_currentColor]">THE WORLD</span>
            <svg width="30" height="18" viewBox="0 0 30 18" className="mt-4 block">
              <path d="M2.7 2.7L15 15L27.3 2.7" fill="none" stroke="currentColor" strokeWidth="5" strokeLinecap="round" />
            </svg>
          </div>
        </div>
        <div className="mt-[62px] mr-[26px] grid grid-cols-[repeat(23,64px)] gap-1">
          {flags.map((flag, i) => (
            <FlagTile key={i} flag={flag} />
          ))}
        </div>
      </section>

      <section className="grid flex-1 grid-cols-2 bg-[#ebf8ff] pt-[178px]">
        <div className="flex flex-col items-center">
          <h2 className="whitespace-nowrap leading-[51px] [-webkit-text-stroke:0.5px_currentColor]">TOP TRIPS BY DURATION</h2>
          <div className="mt-[35.5px]">
            <Pie values={[24, 20, 20, 14, 8]} radius={247} pull={20.5} />
          </div>
          <div className="mt-[48.5px] w-[472px]">
            <Legend entries={durations} />
          </div>
        </div>
        <div className="flex flex-col items-center">
          <h2 className="whitespace-nowrap leading-[51px] [-webkit-text-stroke:0.5px_currentColor]">TOP TRIPS BY DISTANCE</h2>
          <div className="mt-9">
            <Pie values={[33284, 19856, 17397, 15522, 13775]} radius={174.5} pull={21} />
          </div>
          <div className="mt-[49px] w-[444px]">
            <Legend entries={distances} />
          </div>
        </div>
      </section>
    </div>
  );
}
